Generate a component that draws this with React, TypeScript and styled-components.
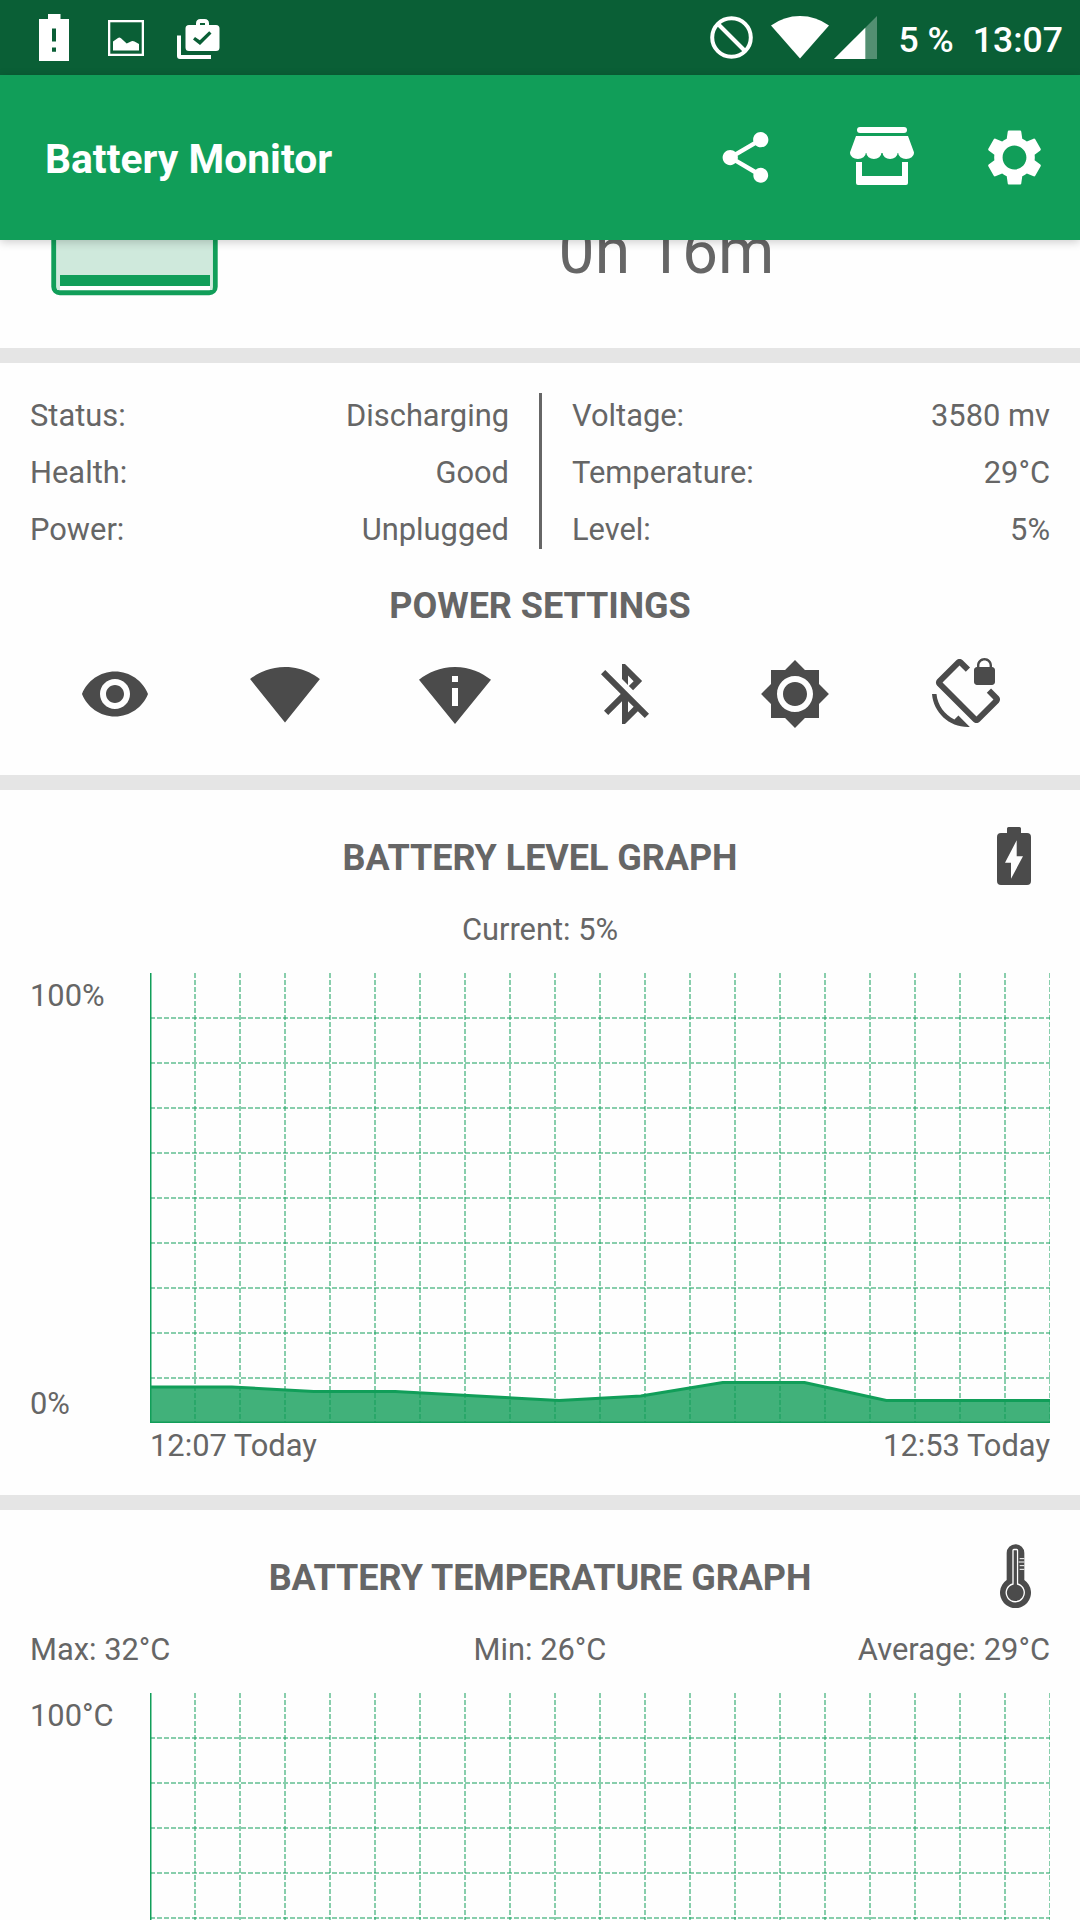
import React from "react";
import styled, { createGlobalStyle } from "styled-components";

const GREEN = "#119e59";
const TEXT = "#666666";
const ICON = "#4b4b4b";

const GlobalStyle = createGlobalStyle`
  * { box-sizing: border-box; }
  html, body { margin: 0; padding: 0; background: #ffffff; }
  body { font-family: Roboto, "Noto Sans", sans-serif; color: ${TEXT}; overflow: hidden; }
  svg { display: block; flex: none; }
`;

const Screen = styled.div`
  width: 1080px;
  height: 1920px;
  overflow: hidden;
  display: flex;
  flex-direction: column;
  background: #fefefe;
`;

const StatusBar = styled.div`
  flex: none;
  height: 75px;
  display: flex;
  justify-content: space-between;
  background: #0a5f36;
  color: #ffffff;
`;

const StatusGroup = styled.div`
  display: flex;
  align-items: flex-start;
  padding: 14px 17px 0 39px;
`;

const StatusText = styled.span<{ $left: number }>`
  margin-left: ${(p) => p.$left}px;
  font-size: 35.6px;
  font-weight: 500;
  line-height: 52px;
  white-space: nowrap;
`;

const Spaced = styled.div<{ $left?: number; $top?: number }>`
  margin-left: ${(p) => p.$left ?? 0}px;
  margin-top: ${(p) => p.$top ?? 0}px;
`;

const Toolbar = styled.header`
  flex: none;
  height: 165px;
  display: flex;
  align-items: center;
  justify-content: space-between;
  padding: 0 33px 0 45px;
  background: ${GREEN};
  color: #ffffff;
  box-shadow: 0 2px 9px rgba(0, 0, 0, 0.2);
  z-index: 1;
`;

const AppTitle = styled.h1`
  margin: 2px 0 0;
  font-size: 40.8px;
  font-weight: 700;
  line-height: 54px;
  white-space: nowrap;
`;

const Actions = styled.div`
  display: flex;
  align-items: center;
  margin-top: -1px;
`;

const Scroll = styled.main`
  flex: 1;
  min-height: 0;
  overflow: hidden;
`;

const Card = styled.section`
  border-bottom: 15px solid #e5e5e5;
`;

const HeroCard = styled(Card)`
  height: 123px;
  display: flex;
  align-items: flex-end;
  overflow: hidden;
`;

const HeroBattery = styled.div`
  width: 268px;
  display: flex;
  justify-content: center;
  padding-bottom: 52px;
`;

const HeroTime = styled.div`
  flex: 1;
  padding: 0 15px 54px 0;
  text-align: center;
  font-size: 64.2px;
  line-height: 86px;
  white-space: nowrap;
`;

const InfoCard = styled(Card)`
  height: 427px;
  padding-top: 30px;
`;

const InfoColumns = styled.div`
  display: grid;
  grid-template-columns: 479px 3px 478px;
  column-gap: 30px;
  height: 156px;
  padding: 0 30px;
`;

const InfoColumn = styled.div`
  display: flex;
  flex-direction: column;
  gap: 15px;
`;

const Separator = styled.div`
  background: ${TEXT};
`;

const Row = styled.div`
  display: flex;
  justify-content: space-between;
`;

const Label = styled.span`
  height: 42px;
  font-size: 30.85px;
  line-height: 46px;
  white-space: nowrap;
`;

const Heading = styled.h2`
  margin: 0;
  height: 48px;
  font-size: 36px;
  font-weight: 700;
  letter-spacing: -0.05px;
  line-height: 52px;
  text-align: center;
  white-space: nowrap;
`;

const SettingsHeading = styled(Heading)`
  margin-top: 31px;
`;

const SettingsRow = styled.div`
  display: grid;
  grid-template-columns: repeat(6, 1fr);
  justify-items: center;
  padding: 30px 30px 0;
`;

const GraphCard = styled(Card)`
  height: 720px;
  padding: 27px 30px 0;
`;

const GraphHeader = styled.div`
  display: grid;
  grid-template-columns: 90px 1fr 90px;
  height: 90px;
  padding-top: 15px;
`;

const HeaderIcon = styled.div<{ $right: number; $top: number }>`
  display: flex;
  justify-content: flex-end;
  margin: ${(p) => p.$top}px ${(p) => p.$right}px 0 0;
`;

const Stats = styled.div`
  display: grid;
  grid-template-columns: 1fr 1fr 1fr;
  height: 66px;
`;

const Stat = styled(Label)<{ $align: "left" | "center" | "right" }>`
  text-align: ${(p) => p.$align};
`;

const Plot = styled.div`
  display: flex;
  height: 450px;
`;

const Axis = styled.div`
  width: 120px;
  display: flex;
  flex-direction: column;
  justify-content: space-between;
`;

const Times = styled(Row)`
  padding-left: 120px;
`;

type GlyphProps = { d: string; size?: number; color?: string };

function Glyph({ d, size = 72, color = ICON }: GlyphProps) {
  return (
    <svg width={size} height={size} viewBox="0 0 24 24" fill={color}>
      <path d={d} />
    </svg>
  );
}

const SHARE =
  "M18 16.08c-.76 0-1.44.3-1.96.77L8.91 12.7c.05-.23.09-.46.09-.7s-.04-.47-.09-.7l7.05-4.11c.54.5 1.25.81 2.04.81 1.66 0 3-1.34 3-3s-1.34-3-3-3-3 1.34-3 3c0 .24.04.47.09.7L8.04 9.81C7.5 9.31 6.79 9 6 9c-1.66 0-3 1.34-3 3s1.34 3 3 3c.79 0 1.5-.31 2.04-.81l7.12 4.16c-.05.21-.08.43-.08.65 0 1.61 1.31 2.92 2.92 2.92 1.61 0 2.92-1.31 2.92-2.92s-1.31-2.92-2.92-2.92z";

const POWER_ICONS = [
  "M12 4.5C7 4.5 2.73 7.61 1 12c1.73 4.39 6 7.5 11 7.5s9.27-3.11 11-7.5c-1.73-4.39-6-7.5-11-7.5zM12 17c-2.76 0-5-2.24-5-5s2.24-5 5-5 5 2.24 5 5-2.24 5-5 5zm0-8c-1.66 0-3 1.34-3 3s1.34 3 3 3 3-1.34 3-3-1.34-3-3-3z",
  "M12.01 21.49L23.64 7c-.45-.34-4.93-4-11.64-4C5.28 3 .81 6.66.36 7l11.63 14.49.01.01.01-.01z",
  "M12 3C6.95 3 3.15 4.85 0 7.23L12 22 24 7.25C20.85 4.87 17.05 3 12 3zm1 13h-2v-6h2v6zm-2-8V6h2v2h-2z",
  "M13 5.83l1.88 1.88-1.6 1.6 1.41 1.41 3.02-3.02L12 2h-1v5.03l2 2v-3.2zM5.41 4L4 5.41 10.59 12 5 17.59 6.41 19 11 14.41V22h1l4.29-4.29 2.3 2.29L20 18.59 5.41 4zM13 18.17v-3.76l1.88 1.88L13 18.17z",
  "M20 8.69V4h-4.69L12 .69 8.69 4H4v4.69L.69 12 4 15.31V20h4.69L12 23.31 15.31 20H20v-4.69L23.31 12 20 8.69zM12 18c-3.31 0-6-2.69-6-6s2.69-6 6-6 6 2.69 6 6-2.69 6-6 6zm0-10c-2.21 0-4 1.79-4 4s1.79 4 4 4 4-1.79 4-4-1.79-4-4-4z",
  "M23.25 12.77l-2.57-2.57-1.41 1.41 2.22 2.22-5.66 5.66L4.51 8.17l5.66-5.66 2.1 2.1 1.41-1.41L11.23.75c-.59-.59-1.54-.59-2.12 0L2.75 7.11c-.59.59-.59 1.54 0 2.12l12.02 12.02c.59.59 1.54.59 2.12 0l6.36-6.36c.59-.59.59-1.54 0-2.12zM8.47 20.48C5.2 18.94 2.86 15.76 2.5 12H1c.51 6.16 5.66 11 11.95 11l.66-.03-3.81-3.82-1.33 1.33zM16 9h5c.55 0 1-.45 1-1V4c0-.55-.45-1-1-1v-.5C21 1.12 19.88 0 18.5 0S16 1.12 16 2.5V3c-.55 0-1 .45-1 1v4c0 .55.45 1 1 1zm.8-6.5c0-.94.76-1.7 1.7-1.7s1.7.76 1.7 1.7V3h-3.4v-.5z",
];

const SETTINGS_GEAR =
  "M19.43 12.98c.04-.32.07-.64.07-.98s-.03-.66-.07-.98l2.11-1.65c.19-.15.24-.42.12-.64l-2-3.46c-.12-.22-.39-.3-.61-.22l-2.49 1c-.52-.4-1.08-.73-1.69-.98l-.38-2.65C14.46 2.18 14.25 2 14 2h-4c-.25 0-.46.18-.49.42l-.38 2.65c-.61.25-1.17.59-1.69.98l-2.49-1c-.23-.09-.49 0-.61.22l-2 3.46c-.13.22-.07.49.12.64l2.11 1.65c-.04.32-.07.65-.07.98s.03.66.07.98l-2.11 1.65c-.19.15-.24.42-.12.64l2 3.46c.12.22.39.3.61.22l2.49-1c.52.4 1.08.73 1.69.98l.38 2.65c.03.24.24.42.49.42h4c.25 0 .46-.18.49-.42l.38-2.65c.61-.25 1.17-.59 1.69-.98l2.49 1c.23.09.49 0 .61-.22l2-3.46c.12-.22.07-.49-.12-.64l-2.11-1.65zM12 16.4c-2.43 0-4.4-1.97-4.4-4.4s1.97-4.4 4.4-4.4 4.4 1.97 4.4 4.4-1.97 4.4-4.4 4.4z";

function BatteryAlertIcon() {
  return (
    <svg width="30" height="47" viewBox="0 0 30 47" fill="#fff">
      <path fillRule="evenodd" d="M9 0h12.5v5H30v42H0V5h9zM13 14.5v13h4v-13zM13 33.5v4.2h4v-4.2z" />
    </svg>
  );
}

function PictureIcon() {
  return (
    <svg width="36" height="36" viewBox="0 0 36 36">
      <rect x="1.15" y="1.15" width="33.7" height="33.7" fill="none" stroke="#fff" strokeWidth="2.3" />
      <path d="M5 30.500v-9l5-3.500q1.500-.9 3 .3l5.700 5.200 4.800-2.300q1.500-.6 3 .3l4.500 2.500v6.500z" fill="#fff" />
    </svg>
  );
}

function BagIcon() {
  return (
    <svg width="43" height="41" viewBox="0 0 43 41" fill="#fff">
      <path
        fillRule="evenodd"
        d="M19 6V4.500Q19 0 23.500 0h4Q32 0 32 4.500V6h7q3.500 0 3.500 3.500V28.500Q42.500 32 39 32H12Q8.500 32 8.500 28.500V9.500Q8.500 6 12 6zM23 6h5V4h-5zM18 18l-2 2.500 7 5.500 11.500-11.500-2.300-2.300L22.800 21.300z"
      />
      <path d="M0 16.500h4V36h30v4H3Q0 40 0 37z" />
    </svg>
  );
}

function BlockedIcon() {
  return (
    <svg width="43" height="43" viewBox="0 0 43 43" fill="none" stroke="#fff" strokeWidth="4">
      <circle cx="21.500" cy="21.500" r="19.300" />
      <path d="M8 8l27 27" />
    </svg>
  );
}

function WifiStatusIcon() {
  return (
    <svg width="58" height="43" viewBox="0 0 58 43">
      <path d="M0 9.500Q13 0 29 0t29 9.500L29 42.500z" fill="#fff" />
    </svg>
  );
}

function SignalIcon() {
  return (
    <svg width="43" height="43" viewBox="0 0 43 43" fill="#fff">
      <path d="M43 0v43H0z" opacity="0.3" />
      <path d="M31.300 11.700V43H0z" />
    </svg>
  );
}

function StoreIcon() {
  return (
    <svg width="64" height="58" viewBox="0 0 64 58" fill="#fff">
      <rect x="7" y="0" width="50" height="6" rx="3" />
      <path d="M6 9h52l5.500 15q.5 1 .5 2a7.800 6 0 0 1-15.800 0h-.6a7.500 6 0 0 1-15 0h-1.200a7.500 6 0 0 1-15 0h-.6A7.800 6 0 0 1 0 26q0-1 .5-2z" />
      <path d="M6 35h6v14h40V35h6v21q0 2-2 2H8q-2 0-2-2z" />
    </svg>
  );
}

function ChargingIcon() {
  return (
    <svg width="34" height="58" viewBox="0 0 34 58">
      <path
        fillRule="evenodd"
        fill={ICON}
        d="M10 6V1.500Q10 0 11.500 0H22.500Q24 0 24 1.500V6h6q4 0 4 4v44q0 4-4 4H4q-4 0-4-4V10q0-4 4-4zM19.700 13.300L8 35.700h6v16L26 29.300h-6.300z"
      />
    </svg>
  );
}

function ThermometerIcon() {
  return (
    <svg width="31" height="64" viewBox="0 0 93 192">
      <path fill={ICON} d="M20 27a26.500 26.500 0 0 1 53 0v81a46.500 46.500 0 1 1-53 0z" />
      <path
        fill="none"
        stroke="#fff"
        strokeWidth="4"
        d="M39 120V19q0-2.500 2.500-2.500h8.500q2.500 0 2.500 2.500v101a27 27 0 1 1-13.500 0z"
      />
      <circle cx="46" cy="146" r="22.500" fill={ICON} />
      <path fill="none" stroke={ICON} strokeWidth="7" d="M46 22v104" />
      <path stroke="#fff" strokeWidth="3" d="M59 44h14M56 54h17M59 65h14M59 76h14" />
    </svg>
  );
}

function BatteryLevelPicture() {
  return (
    <svg width="168" height="120" viewBox="0 0 168 120">
      <rect x="3.800" y="-40" width="161.400" height="156.800" rx="6" fill="#fff" stroke={GREEN} strokeWidth="5" />
      <path d="M7 0H162.500V114H7z" fill="#cfe9dc" />
      <path d="M10 110H160V114H10z" fill="#fff" />
      <path d="M10 99H160V110H10z" fill={GREEN} />
    </svg>
  );
}

const LEVELS = [8, 8, 7, 7, 6, 5, 6, 9, 9, 5, 5, 5];

function Chart({ values }: { values?: number[] }) {
  const columns = Array.from({ length: 20 }, (_, i) => (i + 1) * 45);
  const rows = Array.from({ length: 9 }, (_, i) => (i + 1) * 45);
  const line = values
    ? values.map((v, i) => `${((i * 900) / (values.length - 1)).toFixed(2)} ${450 - v * 4.5}`).join("L")
    : "";
  return (
    <svg width="900" height="450" viewBox="0 0 900 450" fill="none" stroke={GREEN}>
      <g strokeWidth="2" strokeDasharray="5 2" strokeOpacity="0.5">
        {columns.map((x) => (
          <path key={x} d={`M${x} 0V450`} />
        ))}
        {rows.map((y) => (
          <path key={y} d={`M0 ${y}H900`} />
        ))}
      </g>
      <path d="M0 0V450H900" strokeWidth="3" />
      {values && (
        <>
          <path d={`M0 450L${line}L900 450z`} fill={GREEN} fillOpacity="0.8" stroke="none" />
          <path d={`M${line}`} strokeWidth="3" />
        </>
      )}
    </svg>
  );
}

function InfoRow({ label, value }: { label: string; value: string }) {
  return (
    <Row>
      <Label>{label}</Label>
      <Label>{value}</Label>
    </Row>
  );
}

export default function App() {
  return (
    <Screen>
      <GlobalStyle />
      <StatusBar>
        <StatusGroup>
          <BatteryAlertIcon />
          <Spaced $left={39} $top={6}>
            <PictureIcon />
          </Spaced>
          <Spaced $left={33} $top={5}>
            <BagIcon />
          </Spaced>
        </StatusGroup>
        <StatusGroup>
          <Spaced $top={2}>
            <BlockedIcon />
          </Spaced>
          <Spaced $left={18} $top={2}>
            <WifiStatusIcon />
          </Spaced>
          <Spaced $left={5} $top={2}>
            <SignalIcon />
          </Spaced>
          <StatusText $left={21}>5 %</StatusText>
          <StatusText $left={19}>13:07</StatusText>
        </StatusGroup>
      </StatusBar>

      <Toolbar>
        <AppTitle>Battery Monitor</AppTitle>
        <Actions>
          <Glyph d={SHARE} size={61} color="#fff" />
          <Spaced $left={74} $top={-3}>
            <StoreIcon />
          </Spaced>
          <Spaced $left={68}>
            <Glyph d={SETTINGS_GEAR} size={65} color="#fff" />
          </Spaced>
        </Actions>
      </Toolbar>

      <Scroll>
        <HeroCard>
          <HeroBattery>
            <BatteryLevelPicture />
          </HeroBattery>
          <HeroTime>0h 16m</HeroTime>
        </HeroCard>

        <InfoCard>
          <InfoColumns>
            <InfoColumn>
              <InfoRow label="Status:" value="Discharging" />
              <InfoRow label="Health:" value="Good" />
              <InfoRow label="Power:" value="Unplugged" />
            </InfoColumn>
            <Separator />
            <InfoColumn>
              <InfoRow label="Voltage:" value="3580 mv" />
              <InfoRow label="Temperature:" value="29°C" />
              <InfoRow label="Level:" value="5%" />
            </InfoColumn>
          </InfoColumns>
          <SettingsHeading>POWER SETTINGS</SettingsHeading>
          <SettingsRow>
            {POWER_ICONS.map((d) => (
              <Glyph key={d} d={d} />
            ))}
          </SettingsRow>
        </InfoCard>

        <GraphCard>
          <GraphHeader>
            <span />
            <Heading>BATTERY LEVEL GRAPH</Heading>
            <HeaderIcon $right={19} $top={-5}>
              <ChargingIcon />
            </HeaderIcon>
          </GraphHeader>
          <Stats>
            <span />
            <Stat $align="center">Current: 5%</Stat>
            <span />
          </Stats>
          <Plot>
            <Axis>
              <Label>100%</Label>
              <Label>0%</Label>
            </Axis>
            <Chart values={LEVELS} />
          </Plot>
          <Times>
            <Label>12:07 Today</Label>
            <Label>12:53 Today</Label>
          </Times>
        </GraphCard>

        <GraphCard>
          <GraphHeader>
            <span />
            <Heading>BATTERY TEMPERATURE GRAPH</Heading>
            <HeaderIcon $right={19} $top={-8}>
              <ThermometerIcon />
            </HeaderIcon>
          </GraphHeader>
          <Stats>
            <Stat $align="left">Max: 32°C</Stat>
            <Stat $align="center">Min: 26°C</Stat>
            <Stat $align="right">Average: 29°C</Stat>
          </Stats>
          <Plot>
            <Axis>
              <Label>100°C</Label>
            </Axis>
            <Chart />
          </Plot>
        </GraphCard>
      </Scroll>
    </Screen>
  );
}
